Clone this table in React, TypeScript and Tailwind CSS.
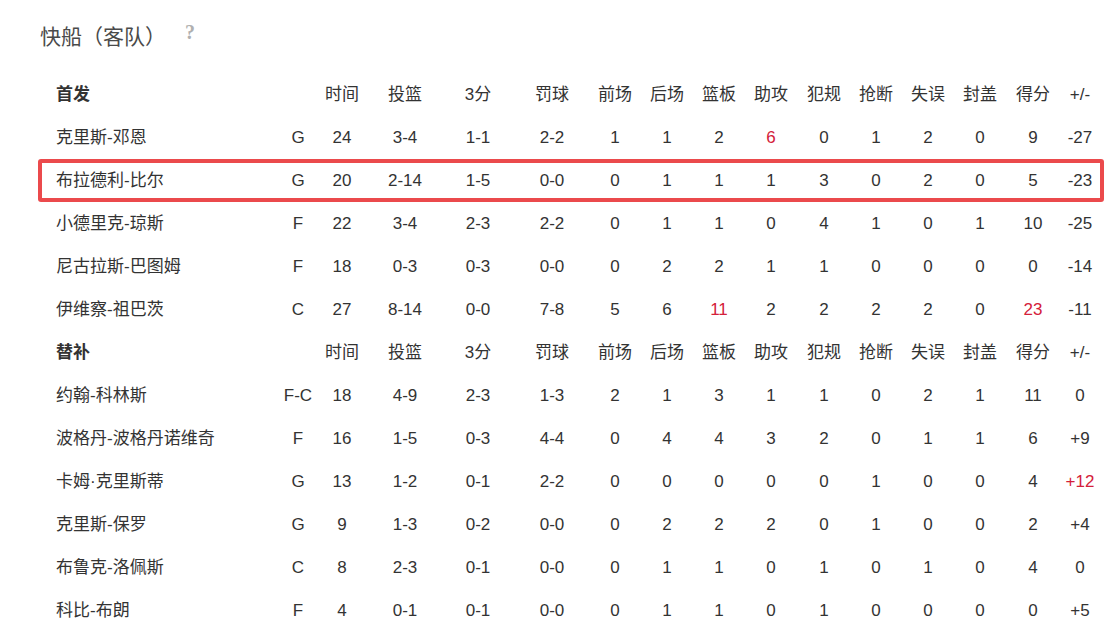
import React from "react";

const FONT = { fontFamily: '"Liberation Sans", "Noto Sans CJK SC", sans-serif' };

const COLS =
  "grid grid-cols-[238px_44px_44px_82px_64px_84px_42px_62px_42px_62px_44px_60px_44px_60px_46px_48px] items-center h-[43px]";

const HEAD = ["时间", "投篮", "3分", "罚球", "前场", "后场", "篮板", "助攻", "犯规", "抢断", "失误", "封盖", "得分", "+/-"];

// "*" marks a value shown in red
const starters = [
  ["克里斯-邓恩", "G", "24", "3-4", "1-1", "2-2", "1", "1", "2", "*6", "0", "1", "2", "0", "9", "-27"],
  ["布拉德利-比尔", "G", "20", "2-14", "1-5", "0-0", "0", "1", "1", "1", "3", "0", "2", "0", "5", "-23"],
  ["小德里克-琼斯", "F", "22", "3-4", "2-3", "2-2", "0", "1", "1", "0", "4", "1", "0", "1", "10", "-25"],
  ["尼古拉斯-巴图姆", "F", "18", "0-3", "0-3", "0-0", "0", "2", "2", "1", "1", "0", "0", "0", "0", "-14"],
  ["伊维察-祖巴茨", "C", "27", "8-14", "0-0", "7-8", "5", "6", "*11", "2", "2", "2", "2", "0", "*23", "-11"],
];

const bench = [
  ["约翰-科林斯", "F-C", "18", "4-9", "2-3", "1-3", "2", "1", "3", "1", "1", "0", "2", "1", "11", "0"],
  ["波格丹-波格丹诺维奇", "F", "16", "1-5", "0-3", "4-4", "0", "4", "4", "3", "2", "0", "1", "1", "6", "+9"],
  ["卡姆·克里斯蒂", "G", "13", "1-2", "0-1", "2-2", "0", "0", "0", "0", "0", "1", "0", "0", "4", "*+12"],
  ["克里斯-保罗", "G", "9", "1-3", "0-2", "0-0", "0", "2", "2", "2", "0", "1", "0", "0", "2", "+4"],
  ["布鲁克-洛佩斯", "C", "8", "2-3", "0-1", "0-0", "0", "1", "1", "0", "1", "0", "1", "0", "4", "0"],
  ["科比-布朗", "F", "4", "0-1", "0-1", "0-0", "0", "1", "1", "0", "1", "0", "0", "0", "0", "+5"],
];

function HeaderRow({ label }: { label: string }) {
  return (
    <div className={COLS}>
      <div className="pl-[18px] font-bold">{label}</div>
      <div />
      {HEAD.map((h) => (
        <div key={h} className="text-center">{h}</div>
      ))}
    </div>
  );
}

function Row({ cells, mark }: { cells: string[]; mark?: boolean }) {
  return (
    <div className={`${COLS} ${mark ? "rounded-[3px] ring-4 ring-inset ring-[#eb4a4c]" : ""}`}>
      {cells.map((c, i) => {
        const red = c.startsWith("*");
        const v = red ? c.slice(1) : c;
        return (
          <div
            key={i}
            className={`${i === 0 ? "pl-[18px] whitespace-nowrap" : "text-center"} ${red ? "text-[#d4203a]" : ""}`}
          >
            {v}
          </div>
        );
      })}
    </div>
  );
}

export default function App() {
  return (
    <div className="w-[1116px] h-[624px] bg-white overflow-hidden text-[#333] text-[17px]" style={FONT}>
      <div className="pl-10 pt-[24px] flex items-start h-[50px]">
        <span className="text-[21px] leading-[26px] text-[#4a4a4a]">快船（客队）</span>
        <span
          className="ml-[19px] -mt-[2px] text-[20px] leading-[20px] font-bold text-[#b0b0b0]"
          style={{ fontFamily: '"Liberation Serif", serif' }}
        >
          ?
        </span>
      </div>

      <div className="ml-[38px] mt-[23px] w-[1066px]">
        <HeaderRow label="首发" />
        {starters.map((r, i) => (
          <Row key={r[0]} cells={r} mark={i === 1} />
        ))}
        <HeaderRow label="替补" />
        {bench.map((r) => (
          <Row key={r[0]} cells={r} />
        ))}
      </div>
    </div>
  );
}
